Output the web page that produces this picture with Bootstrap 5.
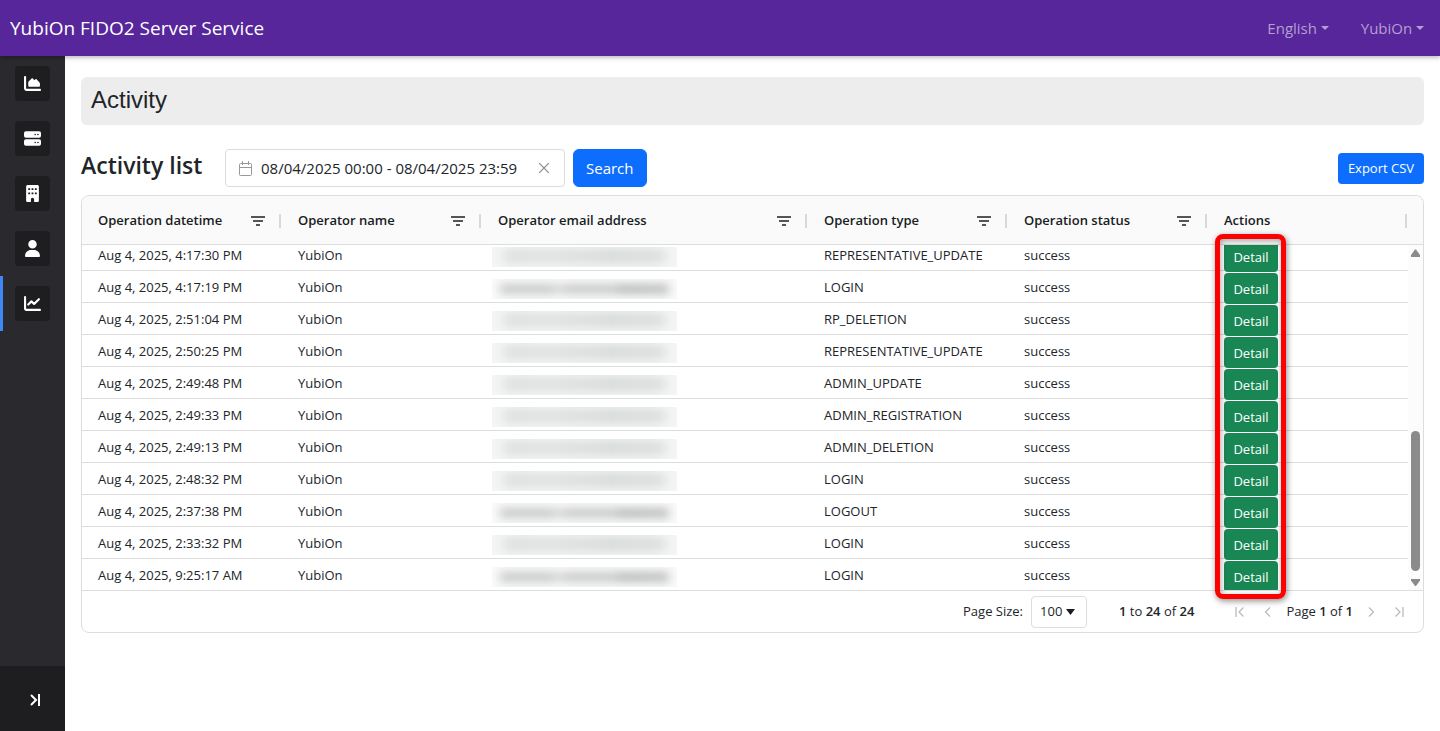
<!DOCTYPE html>
<html lang="en">
<head>
<meta charset="utf-8">
<meta name="viewport" content="width=device-width, initial-scale=1">
<title>YubiOn FIDO2 Server Service</title>
<link href="https://cdn.jsdelivr.net/npm/bootstrap@5.3.0/dist/css/bootstrap.min.css" rel="stylesheet">
<style>
body{font-family:"Segoe UI","Open Sans","Noto Sans",sans-serif;font-size:15px;color:#212529}
.topbar{height:56px;background:#56269a;box-shadow:0 2px 4px rgba(0,0,0,.25);z-index:5}
.brand-title{font-size:19px;color:#fff;padding-left:10px}
.top-link{color:#b49fd3;font-size:15px;padding:0 16px}
.shell{min-height:calc(100vh - 56px)}
.side{width:65px;background:#2a292e}
.side-item{height:55px;border-left:3px solid transparent;padding-right:3px}
.side-item.current{border-left-color:#3f87f5}
.side-icon{width:35px;height:35px;background:#1e1e20;border-radius:4px}
.side-toggle{height:65px;background:#1e1e20;border:0;padding-left:10px}
.content-area{padding:21px 16px}
.page-head{background:#ededed;border-radius:6px;height:48px;padding:0 10px;font:24px/46px "Liberation Sans",Arial,sans-serif}
.list-head{margin-top:24px;margin-bottom:8px}
.list-title{font-size:23px;font-weight:600;width:144px;line-height:32px;margin-bottom:6px;white-space:nowrap}
.date-box{width:340px;height:38px;border:1px solid #dcdcdc;border-radius:4px;padding:0 12px}
.date-box input{font-size:15px;color:#212529;background:none;min-width:0}
.btn-search{font-size:15px;height:38px;padding:0 12px;margin-left:8px}
.btn-export{font-size:13px;width:86px;height:31px;padding:0;line-height:31px;border:0;border-radius:4px}
.grid-box{border:1px solid #dddddd;border-radius:8px;font-size:13px}
.grid-table tr{display:grid;grid-template-columns:200px 200px 326px 200px 200px minmax(100px,1fr)}
.grid-table thead{background:#fafafa;border-bottom:1px solid #dddddd;border-radius:8px 8px 0 0;padding-right:15px}
.grid-table th{height:48px;padding:2px 17px 0 16px;font-weight:600;display:flex;align-items:center;justify-content:space-between;position:relative;color:#181d1f}
.grid-table th::after{content:"";position:absolute;right:1px;width:2px;height:14px;background:#d8d8d8}
.grid-table tbody{height:345px;margin-right:15px}
.grid-table tbody tr{flex:none;height:32px;border-bottom:1px solid #dddddd}
.grid-table tbody tr:last-child{height:31px;border-bottom:0}
.grid-table td{padding:0 16px;line-height:33px;height:31px}
.btn-detail{display:block;margin-top:2px;height:31px;font-size:13px;padding:0 8px;width:54px;line-height:32px;border:0;border-radius:4px}
.masked{display:block;width:185px;height:20px;margin:8px 0 0 -6px;background:#f4f5f5;overflow:hidden;position:relative}
.masked::before{content:"";display:block;margin:3px 12px;height:12px;background:linear-gradient(90deg,#d8dada,#dcdddd 30%,#d2d4d4 65%,#d6d8d8);filter:blur(6px)}
.masked.darker{background:#fafafa}
.masked.darker::before{height:10px;margin:5px 8px;background:linear-gradient(90deg,#c6c8c8 0 29%,#d6d8d8 34% 36%,#c6c8c8 41% 67%,#b8bbbb 72% 78%,#bec0c0);filter:blur(5px)}
.scroll-track{position:absolute;top:49px;right:0;width:15px;height:345px;background:#fcfcfc}
.scroll-thumb{width:9px;height:140px;border-radius:5px;background:#8b8b8b}
.callout{position:absolute;top:38px;left:1133px;width:71px;height:365px;border:5px solid #fd0000;border-radius:8px;box-shadow:1px 2px 6px rgba(0,0,0,.45),inset 1px 2px 6px rgba(0,0,0,.35);pointer-events:none}
.grid-foot{height:42px;border-top:1px solid #dddddd;padding-right:16px}
.grid-foot select{appearance:none;width:56px;height:32px;border:1px solid #dddddd;border-radius:4px;padding:0 8px;font-size:13px;background:#fff;color:#212529}
.size-arrow{position:absolute;right:12px;top:13px;pointer-events:none}
.row-count{margin:0 38px 0 32px}
.pager{gap:10px}
.pager-pair{gap:12px}
.page-btn{border:0;background:none;padding:0;width:16px;height:16px;display:flex;align-items:center;justify-content:center}
.grid-foot b{font-weight:600}
</style>
</head>
<body>
<header class="topbar d-flex align-items-center justify-content-between position-relative">
  <a href="#" class="brand-title text-decoration-none">YubiOn FIDO2 Server Service</a>
  <nav class="d-flex" aria-label="Account">
    <a href="#" class="top-link dropdown-toggle text-decoration-none">English</a>
    <a href="#" class="top-link dropdown-toggle text-decoration-none">YubiOn</a>
  </nav>
</header>
<div class="shell d-flex">
  <nav class="side d-flex flex-column flex-shrink-0" aria-label="Main">
    <a href="#" class="side-item d-flex align-items-center justify-content-center" aria-label="Dashboard"><span class="side-icon d-flex align-items-center justify-content-center"><svg width="17" height="17" viewBox="0 0 512 512" fill="#fff"><path d="M64 64c0-18-14-32-32-32S0 46 0 64v336c0 44 36 80 80 80h400c18 0 32-14 32-32s-14-32-32-32H80c-9 0-16-7-16-16z"/><path d="M128 224c0-10 4-18 10-25l92-96c10-10 24-10 34 0l52 55 28-28c10-10 24-10 34 0l88 94c8 9 14 20 14 32v64c0 18-14 32-32 32H160c-18 0-32-14-32-32z"/></svg></span></a>
    <a href="#" class="side-item d-flex align-items-center justify-content-center" aria-label="Servers"><span class="side-icon d-flex align-items-center justify-content-center"><svg width="17" height="17" viewBox="0 0 512 512"><rect y="40" width="512" height="190" rx="56" fill="#fff"/><rect y="282" width="512" height="190" rx="56" fill="#fff"/><g fill="#1e1e20"><circle cx="336" cy="136" r="24"/><circle cx="420" cy="136" r="24"/><circle cx="336" cy="376" r="24"/><circle cx="420" cy="376" r="24"/></g></svg></span></a>
    <a href="#" class="side-item d-flex align-items-center justify-content-center" aria-label="Company"><span class="side-icon d-flex align-items-center justify-content-center"><svg width="13" height="17" viewBox="0 0 384 512"><path fill="#fff" d="M48 0C21 0 0 21 0 48v416c0 27 21 48 48 48h96v-80c0-26 22-48 48-48s48 22 48 48v80h96c27 0 48-21 48-48V48c0-27-21-48-48-48z"/><path fill="#1e1e20" d="M64 96h56v56H64zm100 0h56v56h-56zm100 0h56v56h-56zM64 224h56v56H64zm100 0h56v56h-56zm100 0h56v56h-56z"/></svg></span></a>
    <a href="#" class="side-item d-flex align-items-center justify-content-center" aria-label="Users"><span class="side-icon d-flex align-items-center justify-content-center"><svg width="15" height="17" viewBox="0 0 448 512" fill="#fff"><path d="M224 256a128 128 0 1 0 0-256 128 128 0 0 0 0 256zm-46 48C80 304 0 384 0 482c0 17 13 30 30 30h388c17 0 30-13 30-30 0-98-80-178-178-178z"/></svg></span></a>
    <a href="#" class="side-item current d-flex align-items-center justify-content-center" aria-label="Activity"><span class="side-icon d-flex align-items-center justify-content-center"><svg width="17" height="17" viewBox="0 0 512 512" fill="none" stroke="#fff" stroke-width="64" stroke-linecap="round" stroke-linejoin="round"><path d="M32 64v336c0 27 21 48 48 48h400M128 288l96-96 80 76 144-140"/></svg></span></a>
    <button type="button" class="side-toggle mt-auto" aria-label="Expand menu"><svg width="12" height="14" viewBox="0 0 12 14" fill="none" stroke="#fff" stroke-width="2"><path d="M2 2l5 5-5 5M10 1v12"/></svg></button>
  </nav>
  <main class="content-area flex-grow-1">
    <h1 class="page-head mb-0">Activity</h1>
    <div class="list-head d-flex align-items-center">
      <h2 class="list-title">Activity list</h2>
      <div class="date-box d-flex align-items-center">
        <svg class="flex-shrink-0" width="15" height="15" viewBox="0 0 15 15" fill="none" stroke="#999"><rect x="1.500" y="2.500" width="12" height="12" rx="1"/><path d="M1.500 6.500h12M4.500 0v4M10.500 0v4"/></svg>
        <input type="text" class="border-0 flex-grow-1 p-0 ms-2" aria-label="Period" value="08/04/2025 00:00 - 08/04/2025 23:59">
        <button type="button" class="page-btn" aria-label="Clear"><svg width="10" height="10" viewBox="0 0 10 10" stroke="#888" stroke-width="1.200"><path d="M0 0l10 10M10 0L0 10"/></svg></button>
      </div>
      <button type="button" class="btn btn-primary btn-search">Search</button>
      <button type="button" class="btn btn-primary btn-sm btn-export ms-auto">Export CSV</button>
    </div>
    <section class="grid-box position-relative">
      <table class="grid-table d-block">
        <thead class="d-block"><tr id="heads"></tr></thead>
        <tbody class="d-flex flex-column justify-content-end overflow-hidden" id="rows"></tbody>
      </table>
      <div class="scroll-track d-flex flex-column align-items-center" aria-hidden="true">
        <svg class="mt-1" width="9" height="8" viewBox="0 0 9 8" fill="#8b8b8b"><path d="M4 .5h1L9 6v2H0V6z"/></svg>
        <div class="scroll-thumb mt-auto"></div>
        <svg class="mt-2 mb-1" width="9" height="7" viewBox="0 0 9 7" fill="#8b8b8b"><path d="M0 0h9v1.500L5 7H4L0 1.500z"/></svg>
      </div>
      <div class="grid-foot d-flex align-items-center justify-content-end">
        <label for="size" class="me-2">Page Size:</label>
        <span class="position-relative"><select id="size" class="d-block"><option>100</option></select><svg class="size-arrow" width="9" height="6" viewBox="0 0 9 6" fill="#181d1f"><path d="M0 0h9L4.500 6z"/></svg></span>
        <span class="row-count"><b>1</b> to <b>24</b> of <b>24</b></span>
        <span class="pager d-flex align-items-center">
          <span class="d-flex pager-pair"><button type="button" class="page-btn" aria-label="First page"><svg width="10" height="10" viewBox="0 0 10 10" fill="none" stroke="#bbb" stroke-width="1.300"><path d="M1 0v10M8.500.5L4 5l4.500 4.500"/></svg></button>
          <button type="button" class="page-btn" aria-label="Previous page"><svg width="10" height="10" viewBox="0 0 10 10" fill="none" stroke="#bbb" stroke-width="1.300"><path d="M7 .5L2.500 5 7 9.500"/></svg></button></span>
          <span>Page <b>1</b> of <b>1</b></span>
          <span class="d-flex pager-pair"><button type="button" class="page-btn" aria-label="Next page"><svg width="10" height="10" viewBox="0 0 10 10" fill="none" stroke="#bbb" stroke-width="1.300"><path d="M3 .5L7.500 5 3 9.500"/></svg></button>
          <button type="button" class="page-btn" aria-label="Last page"><svg width="10" height="10" viewBox="0 0 10 10" fill="none" stroke="#bbb" stroke-width="1.300"><path d="M1.500.5L6 5 1.500 9.500M9 0v10"/></svg></button></span>
        </span>
      </div>
      <div class="callout"></div>
    </section>
  </main>
</div>
<script src="https://cdn.jsdelivr.net/npm/bootstrap@5.3.0/dist/js/bootstrap.bundle.min.js"></script>
<script>
const heads = ["Operation datetime","Operator name","Operator email address","Operation type","Operation status","Actions"];
const filter = '<svg width="14" height="10" viewBox="0 0 14 10" fill="#555"><path d="M0 0h14v2H0zM2 4h10v2H2zM5 8h4v2H5z"/></svg>';
document.getElementById("heads").innerHTML = heads.map((h, i) => `<th scope="col">${h}${i < 5 ? filter : ""}</th>`).join("");
const rows = [
  ["4:17:30 PM","REPRESENTATIVE_UPDATE"],["4:17:19 PM","LOGIN",1],["2:51:04 PM","RP_DELETION"],
  ["2:50:25 PM","REPRESENTATIVE_UPDATE"],["2:49:48 PM","ADMIN_UPDATE"],["2:49:33 PM","ADMIN_REGISTRATION"],
  ["2:49:13 PM","ADMIN_DELETION"],["2:48:32 PM","LOGIN"],["2:37:38 PM","LOGOUT",1],["2:33:32 PM","LOGIN"],["9:25:17 AM","LOGIN",1]
];
document.getElementById("rows").innerHTML = rows.map(([t, type, dark]) => `<tr><td>Aug 4, 2025, ${t}</td><td>YubiOn</td><td><span class="masked${dark ? " darker" : ""}"></span></td><td>${type}</td><td>success</td><td><button type="button" class="btn btn-success btn-detail">Detail</button></td></tr>`).join("");
</script>
</body>
</html>
